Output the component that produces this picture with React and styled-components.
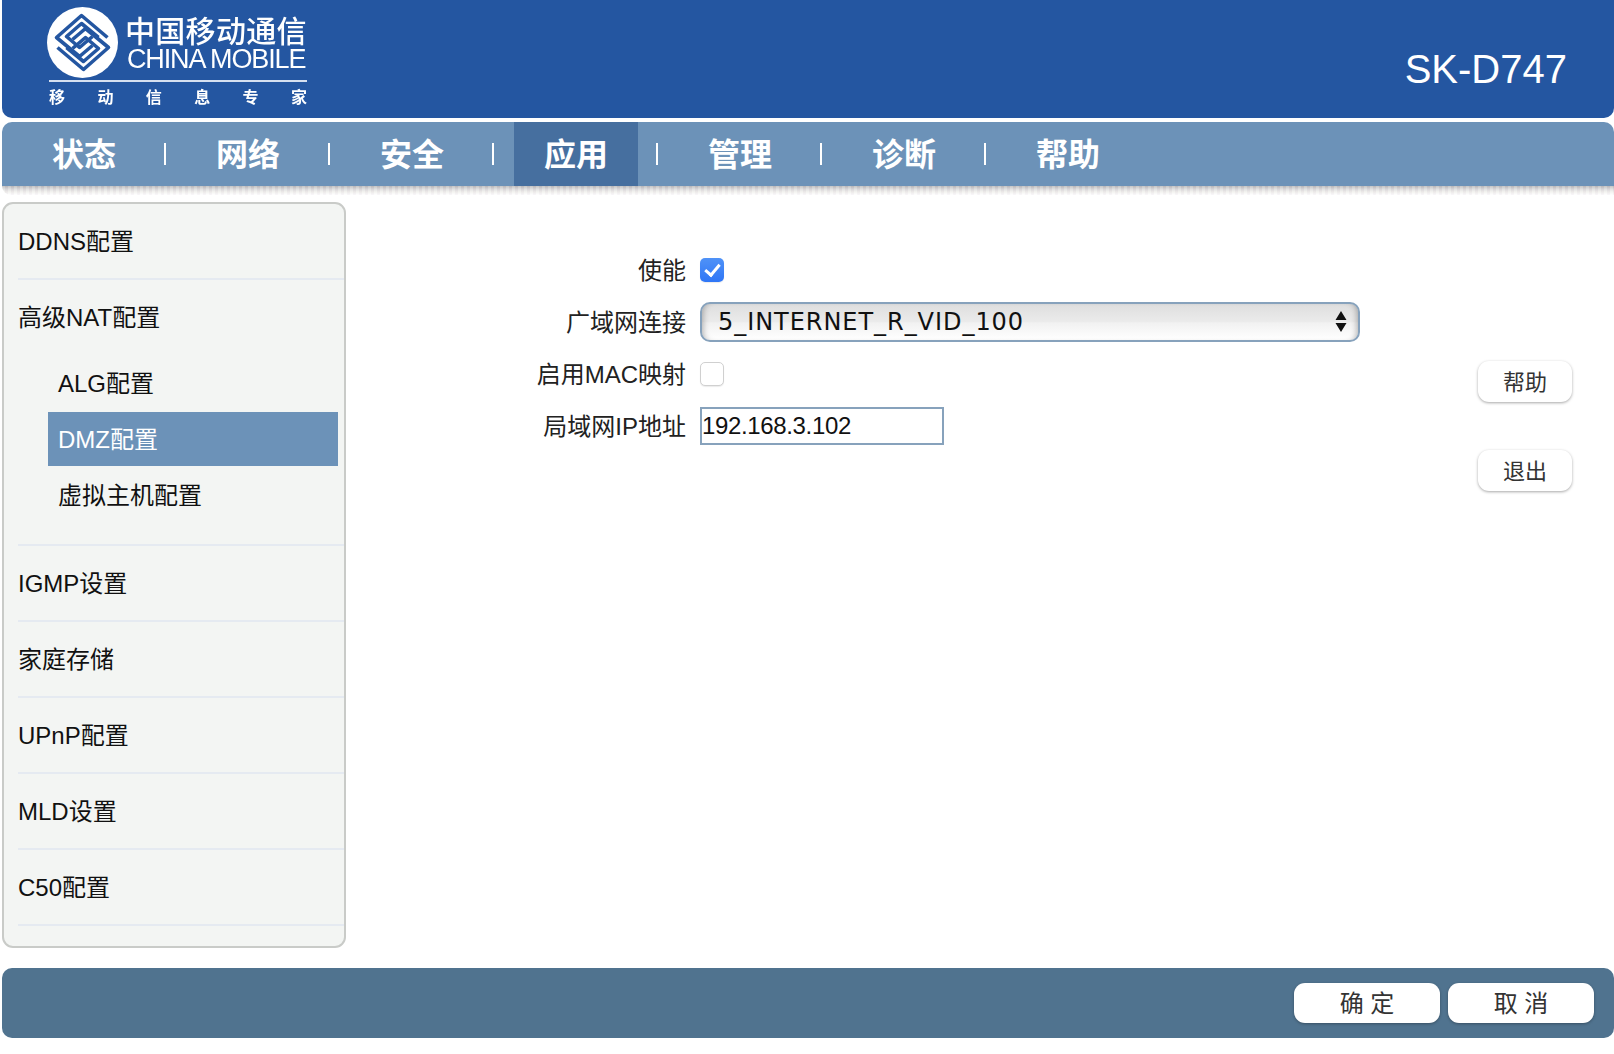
import React from "react";
import styled, { createGlobalStyle } from "styled-components";

const Global = createGlobalStyle`
  html, body { margin: 0; padding: 0; background: #fff; }
  body { font-family: "Liberation Sans", "Noto Sans CJK SC", sans-serif; color: #111; }
`;

const Page = styled.div`
  width: 1614px;
  padding-left: 2px;
  box-sizing: border-box;
`;

const Header = styled.header`
  height: 118px;
  background: #2456a1;
  border-radius: 0 0 10px 10px;
  display: flex;
  justify-content: space-between;
  padding: 7px 47px 0 45px;
  box-sizing: border-box;
`;

const Logo = styled.div`
  width: 260px;
  color: #fff;
  filter: blur(0.4px);
`;

const LogoTop = styled.div`
  display: flex;
  gap: 7px;
  height: 71px;
`;

const LogoMark = styled.svg`
  width: 71px;
  height: 71px;
  flex: none;
`;

const Wordmark = styled.div`
  display: flex;
  flex-direction: column;
  padding-top: 7px;
`;

const WordCn = styled.div`
  font-size: 30px;
  font-weight: 500;
  line-height: 31px;
  letter-spacing: 0.3px;
  white-space: nowrap;
  font-family: "Noto Sans CJK SC", sans-serif;
`;

const WordEn = styled.div`
  font-size: 27px;
  line-height: 26px;
  letter-spacing: -1.15px;
  white-space: nowrap;
  margin: 1px 0 0 2px;
`;

const LogoRule = styled.div`
  height: 2px;
  background: #d6e0f0;
  margin: 2px 0 0 2px;
`;

const Slogan = styled.div`
  display: flex;
  justify-content: space-between;
  font-family: "Noto Sans CJK SC", sans-serif;
  font-size: 16px;
  font-weight: 700;
  line-height: 24px;
  margin: 2px 0 0 2px;
`;

const Model = styled.div`
  color: #fff;
  font-size: 40px;
  line-height: 46px;
  margin-top: 39px;
`;

const Nav = styled.nav`
  height: 64px;
  margin-top: 4px;
  background: #6c92b8;
  border-radius: 10px 10px 0 0;
  display: flex;
  align-items: center;
  padding-left: 20px;
`;

const Tab = styled.div`
  width: 124px;
  height: 64px;
  box-sizing: border-box;
  padding-bottom: 4px;
  display: flex;
  align-items: center;
  justify-content: center;
  font-family: "Noto Sans CJK SC", sans-serif;
  font-size: 32px;
  font-weight: 700;
  color: #fff;
  background: ${(p) => (p.$active ? "#466f9f" : "transparent")};
`;

const TabSep = styled.span`
  width: 2px;
  height: 22px;
  background: #fff;
  margin: 0 20px 0 18px;
  flex: none;
`;

const NavShade = styled.div`
  height: 9px;
  border-radius: 0 0 0 10px;
  background:
    repeating-linear-gradient(90deg, rgba(255, 255, 255, 0.35) 0 3px, rgba(235, 225, 235, 0.25) 3px 6px),
    linear-gradient(#a6a6a6, #d2d2d2 35%, #ecece8 65%, #fff);
`;

const Main = styled.main`
  display: flex;
  margin-top: 7px;
`;

const Sidebar = styled.aside`
  width: 344px;
  box-sizing: border-box;
  flex: none;
  background: #f3f5f3;
  border: 2px solid #c9cbc8;
  border-radius: 11px;
  padding-bottom: 20px;
`;

const MenuGroup = styled.div`
  margin-left: 14px;
  border-bottom: 2px solid #e5eaf1;
`;

const MenuHead = styled.div`
  height: 74px;
  box-sizing: border-box;
  padding-bottom: 4px;
  display: flex;
  align-items: center;
  font-size: 24px;
`;

const SubList = styled.div`
  display: flex;
  flex-direction: column;
  gap: 2px;
  padding: 2px 6px 22px 30px;
`;

const SubItem = styled.div`
  height: 54px;
  box-sizing: border-box;
  padding: 0 0 4px 10px;
  display: flex;
  align-items: center;
  font-size: 24px;
  color: ${(p) => (p.$active ? "#fff" : "#111")};
  background: ${(p) => (p.$active ? "#6c92b8" : "transparent")};
`;

const Content = styled.section`
  flex: 1;
  display: flex;
  justify-content: space-between;
  padding-right: 42px;
`;

const Form = styled.div`
  padding-top: 42px;
  width: 1014px;
  display: grid;
  grid-template-columns: 340px 1fr;
  grid-auto-rows: 52px;
  column-gap: 14px;
  align-items: center;
`;

const Label = styled.label`
  text-align: right;
  font-size: 24px;
  color: #222;
  padding-bottom: 4px;
`;

const Check = styled.input.attrs({ type: "checkbox" })`
  appearance: none;
  margin: 0;
  width: 24px;
  height: 24px;
  box-sizing: border-box;
  border-radius: 5px;
  position: relative;
  border: 1px solid #d0d0d0;
  background: #fff;
  box-shadow: 0 1px 1px rgba(0, 0, 0, 0.08);
  &:checked {
    border: none;
    background: linear-gradient(#4f92f7, #2f76f6);
  }
  &:checked::after {
    content: "";
    position: absolute;
    left: 8px;
    top: 3px;
    width: 6px;
    height: 12px;
    border: solid #fff;
    border-width: 0 3px 3px 0;
    transform: rotate(40deg);
  }
`;

const SelectWrap = styled.div`
  position: relative;
  width: 660px;
  height: 40px;
`;

const Select = styled.select`
  appearance: none;
  width: 100%;
  height: 100%;
  box-sizing: border-box;
  border: 2.5px solid #87a2bc;
  border-radius: 10px;
  padding: 0 40px 0 16px;
  font-family: "DejaVu Sans", sans-serif;
  font-size: 24px;
  letter-spacing: 0.95px;
  color: #111;
  outline: none;
  background: linear-gradient(#dedede, #ebebeb 50%, #f1f1f1 52%, #fff);
  box-shadow: inset 6px 0 6px -5px rgba(0, 0, 0, 0.3), inset -6px 0 6px -5px rgba(0, 0, 0, 0.3);
`;

const SelectArrows = styled.svg`
  position: absolute;
  right: 13px;
  top: 8px;
  width: 12px;
  height: 23px;
  pointer-events: none;
`;

const TextInput = styled.input`
  width: 244px;
  height: 38px;
  box-sizing: border-box;
  border: 2px solid #87a2bc;
  padding: 0;
  font-family: "Liberation Sans", sans-serif;
  font-size: 24px;
  letter-spacing: -0.35px;
  color: #111;
  outline: none;
`;

const SideButtons = styled.div`
  display: flex;
  flex-direction: column;
  gap: 48px;
  padding-top: 159px;
`;

const SideButton = styled.button`
  width: 94px;
  height: 41px;
  border: none;
  background: #fff;
  border-radius: 11px;
  box-shadow: 0 1px 3px rgba(0, 0, 0, 0.35);
  font-family: "Noto Sans CJK SC", sans-serif;
  font-size: 22px;
  color: #333;
  padding: 0 0 3px;
`;

const Footer = styled.footer`
  margin-top: 20px;
  height: 70px;
  background: #50738f;
  border-radius: 10px;
  display: flex;
  justify-content: flex-end;
  align-items: center;
  gap: 8px;
  padding-right: 20px;
`;

const FooterButton = styled.button`
  width: 146px;
  height: 40px;
  border: none;
  background: #fff;
  border-radius: 11px;
  box-shadow: 0 1px 3px rgba(0, 0, 0, 0.3);
  font-family: "Liberation Sans", "Noto Sans CJK SC", sans-serif;
  font-size: 24px;
  color: #333;
  padding: 0 0 4px;
`;

const tabs = ["状态", "网络", "安全", "应用", "管理", "诊断", "帮助"];

const bandA = "M25 -5 L-1 -27 L-26 -5 L-3 14 L10 3";
const bandB = "M16 -5 L-1 -19 L-16 -6 L-3 5 L10 -6";

const Mark = () => (
  <LogoMark viewBox="-35.5 -35.5 71 71">
    <circle r="35.5" fill="#fff" />
    <g fill="none" stroke="#2456a1" strokeWidth="3.6" strokeLinejoin="round">
      <path d={bandA} />
      <path d={bandB} />
      <g transform="rotate(180)">
        <path d={bandA} />
        <path d={bandB} />
      </g>
    </g>
  </LogoMark>
);

const simpleBefore = ["DDNS配置"];
const simpleAfter = ["IGMP设置", "家庭存储", "UPnP配置", "MLD设置", "C50配置"];

export default function App() {
  return (
    <Page>
      <Global />
      <Header>
        <Logo>
          <LogoTop>
            <Mark />
            <Wordmark>
              <WordCn>中国移动通信</WordCn>
              <WordEn>CHINA MOBILE</WordEn>
            </Wordmark>
          </LogoTop>
          <LogoRule />
          <Slogan>
            {"移动信息专家".split("").map((c) => (
              <span key={c}>{c}</span>
            ))}
          </Slogan>
        </Logo>
        <Model>SK-D747</Model>
      </Header>
      <Nav>
        {tabs.map((t, i) => (
          <React.Fragment key={t}>
            <Tab $active={t === "应用"}>{t}</Tab>
            {i < tabs.length - 1 && <TabSep />}
          </React.Fragment>
        ))}
      </Nav>
      <NavShade />
      <Main>
        <Sidebar>
          {simpleBefore.map((t) => (
            <MenuGroup key={t}>
              <MenuHead>{t}</MenuHead>
            </MenuGroup>
          ))}
          <MenuGroup>
            <MenuHead>高级NAT配置</MenuHead>
            <SubList>
              <SubItem>ALG配置</SubItem>
              <SubItem $active>DMZ配置</SubItem>
              <SubItem>虚拟主机配置</SubItem>
            </SubList>
          </MenuGroup>
          {simpleAfter.map((t) => (
            <MenuGroup key={t}>
              <MenuHead>{t}</MenuHead>
            </MenuGroup>
          ))}
        </Sidebar>
        <Content>
          <Form>
            <Label>使能</Label>
            <Check defaultChecked />
            <Label>广域网连接</Label>
            <SelectWrap>
              <Select defaultValue="5_INTERNET_R_VID_100">
                <option>5_INTERNET_R_VID_100</option>
              </Select>
              <SelectArrows viewBox="0 0 12 23">
                <path d="M6 1 L11.5 10 L0.5 10 Z M0.5 13 L11.5 13 L6 22 Z" fill="#111" />
              </SelectArrows>
            </SelectWrap>
            <Label>启用MAC映射</Label>
            <Check />
            <Label>局域网IP地址</Label>
            <TextInput defaultValue="192.168.3.102" />
          </Form>
          <SideButtons>
            <SideButton>帮助</SideButton>
            <SideButton>退出</SideButton>
          </SideButtons>
        </Content>
      </Main>
      <Footer>
        <FooterButton>确 定</FooterButton>
        <FooterButton>取 消</FooterButton>
      </Footer>
    </Page>
  );
}
